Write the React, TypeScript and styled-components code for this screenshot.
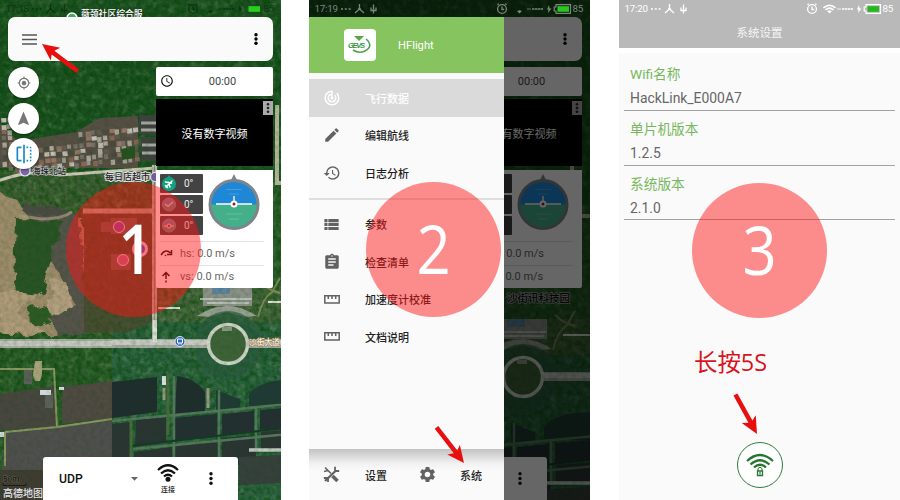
import React from "react";
import styled, { createGlobalStyle, css } from "styled-components";
import {
  MdAccessTime,
  MdArrowDropDown,
  MdAssignment,
  MdEdit,
  MdFlip,
  MdGpsFixed,
  MdHistory,
  MdNavigation,
  MdSettings,
  MdTrackChanges,
  MdViewList,
} from "react-icons/md";

const GlobalStyle = createGlobalStyle`
  * { box-sizing: border-box; }
  body {
    margin: 0;
    background: #fff;
    font-family: Roboto, "Noto Sans CJK SC", sans-serif;
    overflow: hidden;
  }
  svg { display: block; flex: none; }
`;

const Stage = styled.main`
  display: grid;
  grid-template-columns: 309px 310px 281px;
  width: 900px;
  height: 500px;
  overflow: hidden;
`;

const Phone = styled.section<{ $bg?: string }>`
  position: relative;
  width: 281px;
  height: 500px;
  overflow: hidden;
  background: ${(p) => p.$bg ?? "#163a1a"};
`;

const Layer = styled.div<{ $shade?: string }>`
  position: absolute;
  inset: 0;
  display: flex;
  flex-direction: column;
  background: ${(p) => p.$shade ?? "transparent"};
`;

const MapSvg = styled.svg`
  position: absolute;
  inset: 0;
`;

/* ---------- status bar ---------- */

const StatusRow = styled.div<{ $color: string }>`
  display: grid;
  grid-template-columns: 25px 38px 118px 17px 13px 21px 6px 20px 1fr;
  align-items: center;
  flex: none;
  height: 17px;
  padding-left: 5.5px;
  font-size: 9.8px;
  line-height: 17px;
  letter-spacing: -0.25px;
  color: ${(p) => p.$color};
`;

type StatusProps = { time?: string; color: string; battery: string; outline: string; faint?: boolean };

function StatusBar({ time, color, battery, outline, faint }: StatusProps) {
  return (
    <StatusRow $color={color}>
      <span>{time}</span>
      <svg width="38" height="12" fill="none" stroke="currentColor" strokeWidth="1.3">
        <path d="M1 6h2m1.800 0h2m1.800 0h2" strokeWidth="1.500" />
        <path d="M19.500 1v5l-4.500 4m4.500-4l4.500 4M18 6h3" />
        <path d="M33.500 1.500v9M31 4.500v3h5v-3" />
      </svg>
      <span />
      <svg width="12" height="12" viewBox="0 0 12 12" fill="none" stroke="currentColor" strokeWidth="1.300">
        <circle cx="6" cy="6" r="4.400" />
        <path d="M6 3.500v3h2.200M1.500 1.800l1.300-1M10.500 1.800l-1.300-1" />
      </svg>
      <svg width="13" height="10" viewBox="0 0 13 10" fill="none" stroke="currentColor" strokeWidth="1.600">
        {!faint && <path d="M.5 4Q6.500-1.500 12.500 4M2.500 6Q6.500 2.400 10.500 6" />}
        <path d="M4.200 7.300Q6.500 5.400 8.800 7.300L6.500 9.500Z" fill="currentColor" stroke="none" />
      </svg>
      <svg width="18" height="6" viewBox="0 0 18 6" fill="none" stroke="currentColor" strokeWidth="1.300">
        <path d="M1 3h4" opacity=".6" />
        <path d="M6 3h11" strokeDasharray="2.500 .5" />
      </svg>
      <svg width="5" height="8" fill="currentColor"><path d="M2 0L0 4.500h1.500L1 8l3.500-4.500H2.600Z" /></svg>
      <svg width="19" height="10" viewBox="0 0 19 10" fill="none">
        <path d="M3 .700h14.500v8.600H3V7H1.200V3H3Z" stroke={outline} strokeWidth="1.200" />
        <path d="M4.500 2.200H16v5.600H4.500Z" fill={battery} />
      </svg>
      <span>{time && "85"}</span>
    </StatusRow>
  );
}

/* ---------- satellite map ---------- */

const rand = (n: number) => {
  const v = Math.sin(n * 127.1 + 11.7) * 43758.5453;
  return v - Math.floor(v);
};
const roofTones = ["#9b948c", "#77706a", "#aea59a", "#625a52", "#8a6655", "#c4bdb3", "#4b4a42", "#957565"];

function Roofs({ x, y, cols, rows, seed }: { x: number; y: number; cols: number; rows: number; seed: number }) {
  return (
    <g transform={`translate(${x} ${y}) rotate(-4)`}>
      {Array.from({ length: cols * rows }, (_, i) => {
        const r = rand(i + seed);
        const r2 = rand(i * 3 + seed + 7);
        if (r2 < 0.08) return null;
        return (
          <rect
            key={i}
            x={(i % cols) * 6 + r * 1.5}
            y={Math.floor(i / cols) * 6 + r2 * 1.5}
            width={3.8 + r * 1.8}
            height={3.8 + r2 * 1.8}
            fill={roofTones[Math.floor(r * roofTones.length)]}
          />
        );
      })}
    </g>
  );
}

const MapText = styled.text<{ $size?: number }>`
  font: 500 ${(p) => p.$size ?? 9.5}px "Noto Sans CJK SC", sans-serif;
  paint-order: stroke;
`;

function SatelliteMap({ id, dx, dy, campus }: { id: string; dx: number; dy: number; campus?: boolean }) {
  return (
    <MapSvg width="281" height="500" viewBox="0 0 281 500">
      <defs>
        <filter id={`${id}-grain`} x="0" y="0" width="100%" height="100%">
          <feTurbulence type="fractalNoise" baseFrequency="0.22" numOctaves="4" seed="8" />
          <feColorMatrix values="0 0 0 0 0  0 0 0 0 .06  0 0 0 0 0  0 1.900 0 0 -.68" />
        </filter>
        <filter id={`${id}-light`} x="0" y="0" width="100%" height="100%">
          <feTurbulence type="fractalNoise" baseFrequency="0.13" numOctaves="4" seed="23" />
          <feColorMatrix values="0 0 0 0 .5  0 0 0 0 .65  0 0 0 0 .4  1.800 0 0 0 -.88" />
        </filter>
        <filter id={`${id}-rough`} x="-10%" y="-10%" width="120%" height="120%">
          <feTurbulence type="fractalNoise" baseFrequency="0.07" numOctaves="3" seed="4" />
          <feDisplacementMap in="SourceGraphic" scale="12" />
        </filter>
      </defs>
      <g transform={`translate(${dx} ${dy})`}>
        <rect x="-10" y="-40" width="320" height="560" fill="#2c5a2a" />
        <path d="M-10-40h320v210H-10Z" fill="#1d5023" />
        <path d="M0 172h156v162H0Z" fill="#3f5c34" />
        <path d="M112 320h198v180H112Z" fill="#2c6040" />
        <path d="M156 286h154v36H156Z" fill="#46633c" />
        <rect x="-10" y="-40" width="320" height="560" filter={`url(#${id}-grain)`} opacity=".62" />
        <rect x="-10" y="-40" width="320" height="560" filter={`url(#${id}-light)`} opacity=".3" />

        <path d="M76 132l24-14 38-2v52H0v-45l18 18Z" fill="#574f45" />
        <Roofs x={78} y={131} cols={10} rows={6} seed={3} />
        <Roofs x={1} y={149} cols={13} rows={4} seed={70} />
        <Roofs x={0} y={118} cols={2} rows={5} seed={120} />
        <path d="M121 149l14-3v12l-13 2Z" fill="#27521f" />
        <path d="M139 115h18v19h-18ZM141 137h16v24h-16Z" fill="#41413f" />
        <path d="M141 123h16M141 130h16M142 145h15M142 153h15" stroke="#aaa9a8" strokeWidth="3" />

        <g filter={`url(#${id}-rough)`}>
          <path d="M-5 190l22 10 12 16 55 4v114H-5Z" fill="#9d8b6b" />
          <path d="M25 212l55 4 8 118-32 2-5-20 24-12Z" fill="#56524b" />
          <path d="M16 218l46 2-8 32-10 40-22 12-8-22Z" fill="#2b5228" />
          <path d="M28 308l22-6 6 18-25 8Z" fill="#2d5a28" />
          <path d="M52 280l14 2 6 24-18 12-10-14 8-12Z" fill="#b49e80" />
          <path d="M-2 290l40 5-22 18 30 20H-2Z" fill="#b09a79" />
          <path d="M28 205l40 3-8 9-36-4Z" fill="#4c4b44" />
        </g>
        <path d="M20 216l22 3q20 0 30-7" stroke="#ad9d80" strokeWidth="3" fill="none" opacity=".7" />
        <path d="M84 213h71v108l-28 12H84Z" fill="#4a4a30" opacity=".8" />

        <path d="M-5 182Q30 168 60 175L156 168" stroke="#cbc6b5" strokeWidth="3" fill="none" />
        <path d="M83 211h72" stroke="#b5ab92" strokeWidth="5" />
        <path d="M154.500 165v178" stroke="#b7b8a8" strokeWidth="5" />
        <path d="M154.500 165v178" stroke="#7d8574" strokeWidth=".8" />
        <path d="M277 105v78h30" stroke="#b4b69c" strokeWidth="4" fill="none" />
        <path d="M158 308h22M268 302h40" stroke="#d9ddd0" strokeWidth="2" />

        <path d="M203 286h49v20h-49Z" fill="#8c9088" />
        <path d="M212 286h18v8h-18Z" fill="#5d84a0" />
        <path d="M200 299h52M207 303h42" stroke="#bcc0b9" strokeWidth="2" />
        <path d="M197 316q30-20 60 0l-12 1-18-5-18 5Z" fill="#9aa094" />
        <path d="M258 317q4-18 14-25l8-14M260 282q8 8 20 11" stroke="#7c8a58" strokeWidth="2" fill="none" />

        <circle cx="228" cy="345" r="34" fill="#2b5a3f" opacity=".7" />
        <path d="M-10 343.500h320" stroke="#a7aaa0" strokeWidth="9" />
        <path d="M-10 343.500H112M112 342.500h198" stroke="#c7c9c2" strokeWidth="5" />
        <circle cx="228" cy="344" r="19.500" fill="#3f6239" stroke="#cfd3c7" strokeWidth="3.500" />
        <path d="M222 327h10v4h-10Z" fill="#8f9b83" />

        <path d="M0 394l56-8v40L0 431Z" fill="#494640" />
        <path d="M62 387l50-6v37l-50 6Z" fill="#504a43" />
        <path d="M5 433l107-13v80H0Z" fill="#504f4e" />
        <path d="M0 470h43v30H0Z" fill="#413c32" />
        <path d="M112 382l45-5v35l-45 6Z" fill="#202d2e" />
        <path d="M112 424l18-2v38l-18 5ZM136 420l30-3v25l-31 5Z" fill="#2b3434" />
        <path d="M177 376q18 2 28 16v20l-30 2Z" fill="#202d2e" />
        <path d="M216 390l24 9v9l-24 2ZM249 394q15-18 60-14v28l-60-2Z" fill="#213a36" />
        <path d="M174 418l43-4v23l-43 4ZM222 414l32-3v20l-32 4ZM260 410l50-4v20l-50 4Z" fill="#252f33" />
        <path d="M134 452l38-5v12h-38ZM175 445l43-5v40l-43 4ZM222 438l34-3v30h-34ZM261 432l49-4v20l-49 2Z" fill="#2c3434" />
        <path d="M239 457l71-4v28l-71 4Z" fill="#37403d" />
        <path d="M112 421l198-19M133 449l177-17M174 376v125M219 390v90M256 406v45" stroke="#55785d" strokeWidth="2.500" fill="none" />
        <path d="M130 446l180-21" stroke="#183827" strokeWidth="2" />
        <path d="M5 432l52-5-3-58H0M57 427l55-8M5 432v34" stroke="#8b9763" strokeWidth="2" fill="none" />
        <path d="M131 421v40M168 375v60" stroke="#496c3c" strokeWidth="3" />
        <path d="M35 361h7v14l-2 6h-5l-2-6Z" fill="#aaa17d" />
        <path d="M24 370h8v14h-8ZM45 393h8v15h-8Z" fill="#5c6058" />
        <path d="M40 390h11v5H40ZM59 387h5v3h-5ZM162 376h4v9h-4ZM0 432h4v5H0Z" fill="#d8dfe0" />
        <path d="M164 388v12M208 388v20" stroke="#9c9986" strokeWidth="3" />
        <path d="M155 320v22" stroke="#e0e1db" strokeWidth="4" />
        <path d="M249 450h61" stroke="#c3cac5" strokeWidth="3.500" />
        <path d="M238 487l72-5M238 496l72-4" stroke="#315e43" strokeWidth="2" />
      </g>
      <rect width="281" height="500" filter={`url(#${id}-grain)`} opacity=".2" />

      {!campus && (
        <>
          <circle cx="72" cy="18" r="5" fill="#4fa765" stroke="#fff" strokeWidth="1.500" />
          <MapText $size={8.8} x="81" y="17" fill="#fff" stroke="#1a3a1e" strokeWidth="1.200">薇颈社区综合服</MapText>
          <circle cx="25" cy="171" r="5" fill="#7b66ac" stroke="#e9e4f5" strokeWidth="1.200" />
          <MapText $size={8.5} x="32" y="174" fill="#1e2228" stroke="#c9cbc4" strokeWidth="1">海珠北站</MapText>
          <MapText $size={9} x="105" y="180" fill="#1c1c1c" stroke="#ddd" strokeWidth="1.800">每日店超市</MapText>
          <circle cx="155" cy="177" r="4.500" fill="#705da0" stroke="#e9e4f5" strokeWidth="1.200" />
          <path d="M101 222h10v10h-10ZM111 218h26v16h-26ZM111 254h20v16h-20Z" fill="#c08b9a" opacity=".3" />
          <circle cx="119" cy="227" r="5.500" fill="#8c4a9c" stroke="#f0d0df" />
          <circle cx="123" cy="260" r="5.500" fill="#b8668a" stroke="#f0d0df" />
          <circle cx="140" cy="249" r="6.500" fill="#4c54b4" stroke="#efc9dc" strokeWidth="3" />
          <circle cx="180" cy="341.500" r="5" fill="#2f68b5" stroke="#dfe9f6" />
          <path d="M177.500 339h5v4h-5Zm.5 5h1.500m1 0h1.500" fill="none" stroke="#fff" />
          <MapText $size={7.7} x="249" y="345" fill="#fff4dc" stroke="#91765a" strokeWidth="1">沙街大道</MapText>
          <MapText $size={8} x="3" y="481.500" fill="#0c0e0b" stroke="#8e8d81" strokeWidth=".5">50m</MapText>
          <path d="M3 483v2.500h23V483" fill="none" stroke="#191c18" />
          <MapText $size={10} x="3" y="496.500" fill="#e4e4e4" stroke="#3a3a38" strokeWidth="1">高德地图</MapText>
        </>
      )}
      {campus && (
        <MapText $size={10.500} x="198" y="302" fill="#0b0c0b" stroke="#9a9d96" strokeWidth="1.500">沙街讯科技园</MapText>
      )}
    </MapSvg>
  );
}

/* ---------- flight screen ---------- */

const Toolbar = styled.header`
  display: flex;
  align-items: center;
  justify-content: space-between;
  flex: none;
  height: 44px;
  margin: 0 8px;
  padding: 0 14px;
  border-radius: 7px;
  background: #fafafa;
  color: #000;
`;

const Body = styled.div`
  display: flex;
  justify-content: space-between;
  align-items: flex-start;
  flex: 1;
  padding: 6px 8px 0;
`;

const Stack = styled.div<{ $gap: number; $width?: number }>`
  display: flex;
  flex-direction: column;
  gap: ${(p) => p.$gap}px;
  ${(p) => p.$width && css`width: ${p.$width}px;`}
`;

const RoundButton = styled.button<{ $color?: string }>`
  display: grid;
  place-items: center;
  width: 31px;
  height: 31px;
  padding: 0;
  border: 0;
  border-radius: 50%;
  background: #fff;
  color: ${(p) => p.$color ?? "#777"};
  box-shadow: 0 1px 2px rgba(0, 0, 0, 0.5);
`;

const TimeCard = styled.div`
  display: flex;
  align-items: center;
  height: 28.5px;
  padding: 0 2px 0 4px;
  border-radius: 2px;
  background: #fff;
  color: #111;
  span {
    flex: 1;
    text-align: center;
    font-size: 11px;
    color: #444;
  }
`;

const VideoCard = styled.div`
  position: relative;
  display: grid;
  place-items: center;
  height: 67px;
  background: #000;
  color: #fff;
  font-size: 11px;
`;

const VideoMenu = styled.div`
  position: absolute;
  top: 2px;
  right: 0;
  display: grid;
  place-items: center;
  width: 10px;
  height: 14px;
  background: #aaa;
  color: #222;
`;

const Telemetry = styled.div`
  display: flex;
  flex-direction: column;
  height: 118.5px;
  padding: 4.5px 9px 0 4px;
  border-radius: 0 0 2px 2px;
  background: #fff;
`;

const Attitude = styled.div`
  display: flex;
  justify-content: space-between;
  height: 67px;
  padding-right: 4px;
`;

const AngleChip = styled.div`
  display: flex;
  align-items: center;
  gap: 7px;
  width: 43px;
  height: 19px;
  padding-left: 1px;
  border-radius: 1px;
  background: #434343;
  color: #eee;
  font-size: 10px;
`;

const SpeedRow = styled.div`
  display: flex;
  align-items: center;
  gap: 7px;
  height: 23.5px;
  border-top: 1px solid #e3e3e3;
  color: #666;
  font-size: 11px;
  white-space: nowrap;
  svg { color: #111; }
`;

const ConnectBar = styled.footer`
  display: grid;
  grid-template-columns: 67px 31px 51px 1fr;
  align-items: center;
  flex: none;
  width: 195px;
  height: 43px;
  margin-left: 43px;
  padding-left: 16px;
  border-radius: 3px 3px 0 0;
  background: #fff;
  color: #111;
  font-size: 12.2px;
  font-weight: 500;
`;

const LinkButton = styled.div`
  display: flex;
  flex-direction: column;
  align-items: center;
  width: 22px;
  gap: 3px;
  padding-top: 1px;
  font: 500 7px/9px "Noto Sans CJK SC", sans-serif;
  white-space: nowrap;
`;

function MoreDots({ size = 13, r = 1.7 }: { size?: number; r?: number }) {
  return (
    <svg width="6" height={size} fill="currentColor">
      <circle cx="3" cy={r} r={r} />
      <circle cx="3" cy={size / 2} r={r} />
      <circle cx="3" cy={size - r} r={r} />
    </svg>
  );
}

function Gauge({ kind }: { kind: "yaw" | "roll" | "pitch" }) {
  return (
    <svg width="16" height="17" viewBox="0 0 16 17">
      {kind === "yaw" ? (
        <>
          <path d="M8 0l2 3H6Z" fill="#16a07f" />
          <circle cx="8" cy="9" r="7" fill="#16a07f" />
          <path d="M5 12l6-6M4.500 7l6 1.200M9 12l-1.500-4.500M4.500 10.500l2 2" stroke="#fff" strokeWidth="1.500" strokeLinecap="round" />
        </>
      ) : (
        <>
          <circle cx="8" cy="8.500" r="6.500" fill="#6f7f9b" stroke="#9a8d8b" />
          <path d="M2 9h12a6 6 0 0 1-12 0Z" fill="#64877a" />
          {kind === "roll" ? (
            <path d="M4 8l3 2.500 5-4.500" stroke="#ddd" strokeWidth="1.200" fill="none" />
          ) : (
            <>
              <path d="M3 9h10" stroke="#ddd" />
              <circle cx="8" cy="9" r="2" fill="#d32f2f" stroke="#ddd" />
            </>
          )}
        </>
      )}
    </svg>
  );
}

function Horizon() {
  return (
    <svg width="52" height="58" viewBox="0 0 52 58">
      <path d="M26 0l4 8h-8Z" fill="#7e858a" />
      <circle cx="26" cy="30.500" r="24" fill="#1e88d6" />
      <path d="M2 30.500h48a24 24 0 0 1-48 0Z" fill="#44b089" />
      <path d="M18 15.500h16M21 20h10M18 40h16M21 45h10" stroke="#fff" strokeWidth=".6" opacity=".3" />
      <circle cx="26" cy="30.500" r="24" fill="none" stroke="#7e858a" strokeWidth="3" />
      <path d="M8 30h36M26 22v6" stroke="#fff" strokeWidth="1.300" />
      <circle cx="26" cy="30" r="2.500" fill="#a3152b" stroke="#fff" strokeWidth="2" />
    </svg>
  );
}

function WifiBars() {
  return (
    <svg width="22" height="18" viewBox="0 0 22 18" fill="none" stroke="currentColor" strokeWidth="2.200">
      <path d="M1 6Q11-3.500 21 6M4 9.500Q11 3 18 9.500M7 12.500Q11 9 15 12.500" />
      <circle cx="11" cy="15.300" r="2.500" fill="currentColor" stroke="none" />
    </svg>
  );
}

function FlightScreen({ children }: { children: React.ReactNode }) {
  return (
    <Layer>
      {children}
      <Toolbar>
        <svg width="16" height="11" stroke="#555" strokeWidth="1.300">
          <path d="M0 1h15M0 5.500h15M0 10h15" />
        </svg>
        <MoreDots size={12} />
      </Toolbar>
      <Body>
        <Stack $gap={4.5}>
          <RoundButton><MdGpsFixed size={14} /></RoundButton>
          <RoundButton><MdNavigation size={17} /></RoundButton>
          <RoundButton $color="#1b87c4"><MdFlip size={20} /></RoundButton>
        </Stack>
        <Stack $gap={3.5} $width={117}>
          <TimeCard>
            <MdAccessTime size={14} />
            <span>00:00</span>
          </TimeCard>
          <VideoCard>
            没有数字视频
            <VideoMenu><MoreDots size={10} r={1.3} /></VideoMenu>
          </VideoCard>
          <Telemetry>
            <Attitude>
              <Stack $gap={2}>
                <AngleChip><Gauge kind="yaw" />0°</AngleChip>
                <AngleChip><Gauge kind="roll" />0°</AngleChip>
                <AngleChip><Gauge kind="pitch" />0°</AngleChip>
              </Stack>
              <Horizon />
            </Attitude>
            <SpeedRow>
              <svg width="13" height="10" fill="none" stroke="currentColor" strokeWidth="1.500">
                <path d="M1 7Q5.500 0 10.500 5M11.500 2v4.500H7" />
                <circle cx="5.500" cy="7.500" r=".8" fill="currentColor" stroke="none" />
              </svg>
              hs: 0.0 m/s
            </SpeedRow>
            <SpeedRow>
              <svg width="13" height="12" fill="none" stroke="currentColor" strokeWidth="1.500">
                <path d="M6 8V1.500M2.500 5L6 1.500 9.500 5M6 9.500v2" />
              </svg>
              vs: 0.0 m/s
            </SpeedRow>
          </Telemetry>
        </Stack>
      </Body>
      <ConnectBar>
        <span>UDP</span>
        <MdArrowDropDown size={17} color="#666" />
        <LinkButton>
          <WifiBars />
          连接
        </LinkButton>
        <MoreDots size={13} />
      </ConnectBar>
    </Layer>
  );
}

/* ---------- drawer ---------- */

const Drawer = styled.nav`
  display: flex;
  flex-direction: column;
  width: 195px;
  flex: 1;
  background: #fafafa;
`;

const Brand = styled.div`
  display: flex;
  align-items: center;
  gap: 22px;
  flex: none;
  height: 56px;
  margin-bottom: 6px;
  padding-left: 35px;
  background: #86c45f;
  color: #fff;
  font-size: 11.2px;
`;

const Logo = styled.div`
  display: grid;
  place-items: center;
  width: 32px;
  height: 32px;
  border-radius: 4px;
  background: #fff;
`;

const LogoText = styled.text`
  font: italic 700 7.5px "Liberation Sans", sans-serif;
`;

const MenuItem = styled.div<{ $active?: boolean }>`
  display: grid;
  grid-template-columns: 17px 1fr;
  column-gap: 25px;
  align-items: center;
  justify-items: start;
  height: 37.6px;
  padding-left: 14px;
  font: 500 11px/16px "Noto Sans CJK SC", sans-serif;
  color: ${(p) => (p.$active ? "#fff" : "#222")};
  background: ${(p) => (p.$active ? "#dadada" : "transparent")};
  svg { justify-self: center; color: ${(p) => (p.$active ? "#fff" : "#626262")}; }
`;

const Rule = styled.hr`
  width: 100%;
  height: 2px;
  margin: 6px 0 5.5px;
  border: 0;
  background: #dedede;
`;

const DrawerFooter = styled.div`
  display: grid;
  grid-template-columns: 17px 28px 17px 1fr;
  column-gap: 25px;
  align-items: center;
  height: 51px;
  margin-top: auto;
  padding-left: 14px;
  background: linear-gradient(#c2c2c2, #f0f0f0 14px, #fafafa 21px);
  font: 500 11px/16px "Noto Sans CJK SC", sans-serif;
  color: #222;
  white-space: nowrap;
  svg { color: #626262; }
`;

function CrossedTools() {
  return (
    <svg width="17" height="17" viewBox="0 0 17 17" fill="none" stroke="currentColor">
      <path d="M2 1.500l6 6" strokeWidth="1.600" />
      <path d="M9.500 10l5 5" strokeWidth="3.500" />
      <path d="M2 15L12 5.500" strokeWidth="2.300" />
      <path d="M12 .800V5h4.200M.800 12H5v4" strokeWidth="1.800" />
      <path d="M1 5.500l4-1" strokeWidth="1.500" />
    </svg>
  );
}

function Ruler() {
  return (
    <svg width="16" height="9" viewBox="0 0 16 9" fill="none" stroke="currentColor" strokeWidth="1.500">
      <path d="M.8 .800h14.400v7.200H.800ZM4.300 1v3M8 1v3M11.700 1v3" />
    </svg>
  );
}

const menuTop = [
  { label: "飞行数据", icon: <MdTrackChanges size={18} />, active: true },
  { label: "编辑航线", icon: <MdEdit size={18} /> },
  { label: "日志分析", icon: <MdHistory size={18} /> },
];
const menuBottom = [
  { label: "参数", icon: <MdViewList size={19} /> },
  { label: "检查清单", icon: <MdAssignment size={18} /> },
  { label: "加速度计校准", icon: <Ruler /> },
  { label: "文档说明", icon: <Ruler /> },
];

function NavDrawer() {
  return (
    <Drawer>
      <Brand>
        <Logo>
          <svg width="24" height="22" viewBox="0 0 24 22">
            <path d="M6 2h10l-5 5Z" fill="#5ba34b" />
            <path d="M18 5q8 7-1 12-6 3-12-1" fill="none" stroke="#4ca34b" strokeWidth="1.600" />
            <LogoText x="0" y="13.500" fill="#35963f" textLength="17">GEVS</LogoText>
          </svg>
        </Logo>
        HFlight
      </Brand>
      {menuTop.map((m) => (
        <MenuItem key={m.label} $active={m.active}>{m.icon}{m.label}</MenuItem>
      ))}
      <Rule />
      {menuBottom.map((m) => (
        <MenuItem key={m.label}>{m.icon}{m.label}</MenuItem>
      ))}
      <DrawerFooter>
        <CrossedTools />
        <span>设置</span>
        <MdSettings size={19} />
        <span>系统</span>
      </DrawerFooter>
    </Drawer>
  );
}

/* ---------- settings screen ---------- */

const SettingsHeader = styled.header`
  height: 48px;
  background: #b9b9b9;
  box-shadow: 0 5px 0 #fff;
`;

const SettingsTitle = styled.h1`
  margin: 7px 0 0;
  text-align: center;
  font: 400 11.5px/17px "Noto Sans CJK SC", sans-serif;
  color: #f5f5f5;
`;

const Fields = styled.div`
  display: flex;
  flex-direction: column;
  padding: 8px 5px 0;
  flex: 1;
`;

const Field = styled.div`
  display: flex;
  flex-direction: column;
  height: 54.8px;
  padding: 7px 6px 0;
  border-bottom: 1.5px solid #a2a2a2;
`;

const FieldLabel = styled.span`
  font-size: 13.7px;
  line-height: 22px;
  color: #78b85c;
`;

const FieldValue = styled.span`
  font-size: 13.9px;
  line-height: 26px;
  color: #666;
`;

const LockButton = styled.button`
  display: grid;
  place-items: center;
  align-self: center;
  width: 46px;
  height: 46px;
  margin-bottom: 12px;
  padding: 0;
  border: 1.5px solid #2d7d3b;
  border-radius: 50%;
  background: #fff;
  color: #26752f;
`;

const fields = [
  ["Wifi名称", "HackLink_E000A7"],
  ["单片机版本", "1.2.5"],
  ["系统版本", "2.1.0"],
];

/* ---------- annotations ---------- */

const StepBadge = styled.div<{ $x: number; $y: number }>`
  position: absolute;
  left: ${(p) => p.$x - 67.5}px;
  top: ${(p) => p.$y - 67.5}px;
  width: 135px;
  height: 135px;
  border-radius: 50%;
  background: rgba(255, 20, 20, 0.48);
  color: #fff;
`;

const StepNumber = styled.div<{ $bold?: boolean }>`
  font: ${(p) => (p.$bold ? 600 : 500)} 68px/131px "Open Sans", sans-serif;
  text-align: center;
  padding-left: ${(p) => (p.$bold ? 5 : 0)}px;
  transform: scaleX(0.88);
`;

const ArrowSvg = styled.svg<{ $x: number; $y: number; $angle: number }>`
  position: absolute;
  left: ${(p) => p.$x}px;
  top: ${(p) => p.$y - 8}px;
  transform-origin: 0 50%;
  transform: rotate(${(p) => p.$angle}deg);
`;

function Arrow({ x, y, angle }: { x: number; y: number; angle: number }) {
  return (
    <ArrowSvg $x={x} $y={y} $angle={angle} width="46" height="16" viewBox="0 0 46 16">
      <path d="M0 8L17 0 14 6 45 6v4.500L14 10.500l3 5.500Z" fill="#e8100e" />
    </ArrowSvg>
  );
}

const HoldNote = styled.div`
  position: absolute;
  left: 75px;
  top: 346px;
  font: 400 23.5px/32px "Open Sans", "Noto Sans CJK SC", sans-serif;
  letter-spacing: -0.1px;
  color: #d8141c;
  white-space: nowrap;
`;

export default function App() {
  return (
    <>
      <GlobalStyle />
      <Stage>
        <Phone>
          <SatelliteMap id="north" dx={0} dy={0} />
          <FlightScreen>
            <StatusBar time="17:18" color="#0e3313" battery="#28d01e" outline="#1c4a1e" faint />
          </FlightScreen>
          <StepBadge $x={133} $y={249}><StepNumber $bold>1</StepNumber></StepBadge>
          <Arrow x={42} y={43.5} angle={37} />
        </Phone>

        <Phone>
          <SatelliteMap id="south" dx={-14} dy={33} campus />
          <FlightScreen>
            <StatusBar color="transparent" battery="transparent" outline="transparent" faint />
          </FlightScreen>
          <Layer $shade="rgba(0, 0, 0, 0.6)">
            <StatusBar time="17:19" color="#7d877d" battery="#28c81e" outline="#7d877d" faint />
            <NavDrawer />
          </Layer>
          <StepBadge $x={124.5} $y={249.5}><StepNumber>2</StepNumber></StepBadge>
          <Arrow x={155} y={463} angle={232} />
        </Phone>

        <Phone $bg="#fafafa">
          <Layer>
            <SettingsHeader>
              <StatusBar time="17:20" color="#fff" battery="#22b91c" outline="#fff" />
              <SettingsTitle>系统设置</SettingsTitle>
            </SettingsHeader>
            <Fields>
              {fields.map(([label, value]) => (
                <Field key={label}>
                  <FieldLabel>{label}</FieldLabel>
                  <FieldValue>{value}</FieldValue>
                </Field>
              ))}
            </Fields>
            <LockButton>
              <svg width="28" height="24" viewBox="0 0 28 24" fill="none" stroke="currentColor" strokeWidth="2.300">
                <path d="M1 8Q14-4 27 8M4.500 11.500Q14 3 23.500 11.500M8 14.500Q14 9 20 14.500" />
                <path d="M12 18v-2.500q2-2.500 4 0V18" strokeWidth="1" />
                <path d="M11.500 18h5v4.500h-5Z" strokeWidth="1.300" />
                <path d="M14 19v2.500" strokeWidth="1.200" />
              </svg>
            </LockButton>
          </Layer>
          <StepBadge $x={140.5} $y={250}><StepNumber>3</StepNumber></StepBadge>
          <HoldNote>长按5S</HoldNote>
          <Arrow x={137.5} y={434} angle={241} />
        </Phone>
      </Stage>
    </>
  );
}
